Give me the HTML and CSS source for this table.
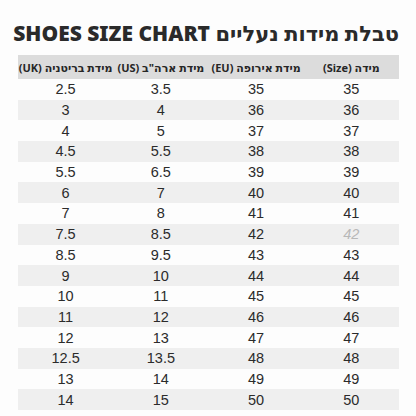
FILE: index.html
```html
<!DOCTYPE html>
<html lang="he" dir="rtl">
<head>
    <meta charset="UTF-8">
    <title>טבלת מידות נעליים</title>
    <link rel="stylesheet" href="styles.css">
</head>
<body>
    <div class="chart">
        <h1 class="chart-title">טבלת מידות נעליים SHOES SIZE CHART</h1>
        <table class="size-table">
            <tr class="head-row">
                <th>מידה (Size)</th>
                <th>מידת אירופה (EU)</th>
                <th>מידת ארה"ב (US)</th>
                <th>מידת בריטניה (UK)</th>
            </tr>
            <tr><td>35</td><td>35</td><td>3.5</td><td>2.5</td></tr>
            <tr><td>36</td><td>36</td><td>4</td><td>3</td></tr>
            <tr><td>37</td><td>37</td><td>5</td><td>4</td></tr>
            <tr><td>38</td><td>38</td><td>5.5</td><td>4.5</td></tr>
            <tr><td>39</td><td>39</td><td>6.5</td><td>5.5</td></tr>
            <tr><td>40</td><td>40</td><td>7</td><td>6</td></tr>
            <tr><td>41</td><td>41</td><td>8</td><td>7</td></tr>
            <tr><td class="faded">42</td><td>42</td><td>8.5</td><td>7.5</td></tr>
            <tr><td>43</td><td>43</td><td>9.5</td><td>8.5</td></tr>
            <tr><td>44</td><td>44</td><td>10</td><td>9</td></tr>
            <tr><td>45</td><td>45</td><td>11</td><td>10</td></tr>
            <tr><td>46</td><td>46</td><td>12</td><td>11</td></tr>
            <tr><td>47</td><td>47</td><td>13</td><td>12</td></tr>
            <tr><td>48</td><td>48</td><td>13.5</td><td>12.5</td></tr>
            <tr><td>49</td><td>49</td><td>14</td><td>13</td></tr>
            <tr><td>50</td><td>50</td><td>15</td><td>14</td></tr>
        </table>
    </div>
</body>
</html>
```

FILE: styles.css
```css
body {
    margin: 0;
    background: #fdfdfd;
    font-family: 'Liberation Sans', Arial, sans-serif;
    color: #2b2b2b;
}

.chart {
    padding: 21px 17px 0 18px;
}

.chart-title {
    margin: 0 0 10px;
    font-family: 'Noto Sans', 'DejaVu Sans', sans-serif;
    font-weight: 900;
    font-size: 21px;
    line-height: 24px;
    color: #2a2a2a;
    text-align: center;
    white-space: nowrap;
}

.size-table {
    width: 100%;
    border-collapse: collapse;
    table-layout: fixed;
}

.size-table th {
    height: 24px;
    padding: 0;
    background: #dcdcdc;
    font-family: 'Noto Sans', 'DejaVu Sans', sans-serif;
    font-weight: 700;
    font-size: 11px;
    color: #262626;
    text-align: center;
    white-space: nowrap;
}

.size-table td {
    height: 20.7px;
    padding: 0;
    font-size: 14.5px;
    text-align: center;
    line-height: 18px;
}

.size-table tr:nth-child(odd) td {
    background: #efefef;
}

.size-table td.faded {
    color: #b8b8b8;
    font-style: italic;
}
```
